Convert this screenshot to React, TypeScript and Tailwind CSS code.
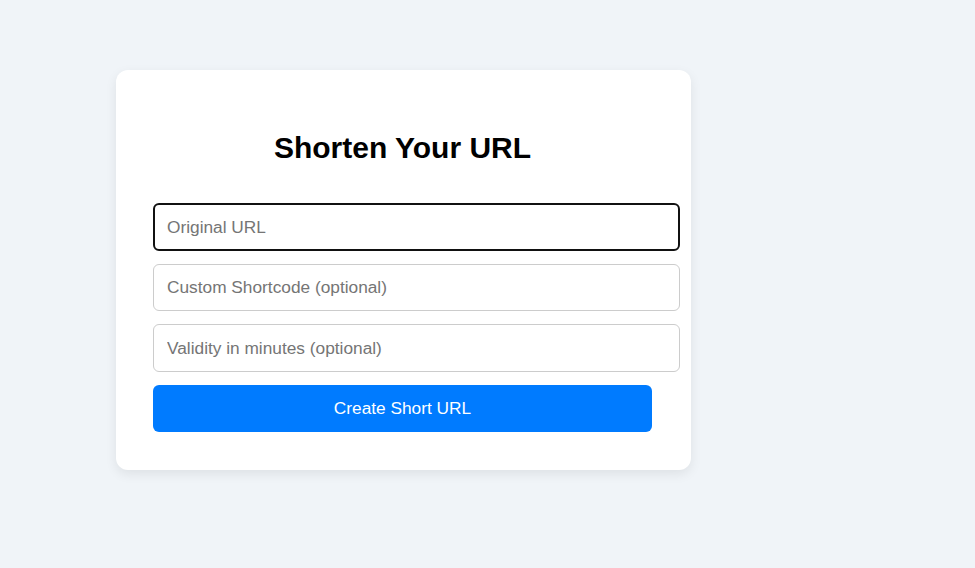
import React from "react";

export default function App() {
  return (
    <div
      className="min-h-[568px] w-full bg-[#f0f4f8] pt-[70px] pl-[116px]"
      style={{ fontFamily: '"Liberation Sans", Arial, sans-serif' }}
    >
      <div className="w-[575px] rounded-[12px] bg-white pl-[37px] pr-[39px] pt-[38px] pb-[38px] shadow-[0_4px_12px_rgba(0,0,0,0.08)]">
        <h2 className="mt-[23px] mb-[38px] text-center text-[30px] font-bold leading-[34px] text-black">
          Shorten Your URL
        </h2>
        <div className="flex flex-col">
          <input
            className="mb-[13px] box-content h-[20px] w-full rounded-[6px] border-2 border-[#111111] bg-white px-[12px] py-[11.8px] text-[17.3px] leading-[20px] outline-none placeholder:text-[#757575]"
            placeholder="Original URL"
          />
          <input
            className="mb-[13px] box-content h-[20px] w-full rounded-[6px] border border-[#cccccc] bg-white px-[13px] py-[12.8px] text-[17.3px] leading-[20px] outline-none placeholder:text-[#757575]"
            placeholder="Custom Shortcode (optional)"
          />
          <input
            className="mb-[13px] box-content h-[20px] w-full rounded-[6px] border border-[#cccccc] bg-white px-[13px] py-[12.8px] text-[17.3px] leading-[20px] outline-none placeholder:text-[#757575]"
            placeholder="Validity in minutes (optional)"
          />
          <button className="h-[47.5px] w-full rounded-[6px] bg-[#007bff] text-[17.3px] text-white">
            Create Short URL
          </button>
        </div>
      </div>
    </div>
  );
}
